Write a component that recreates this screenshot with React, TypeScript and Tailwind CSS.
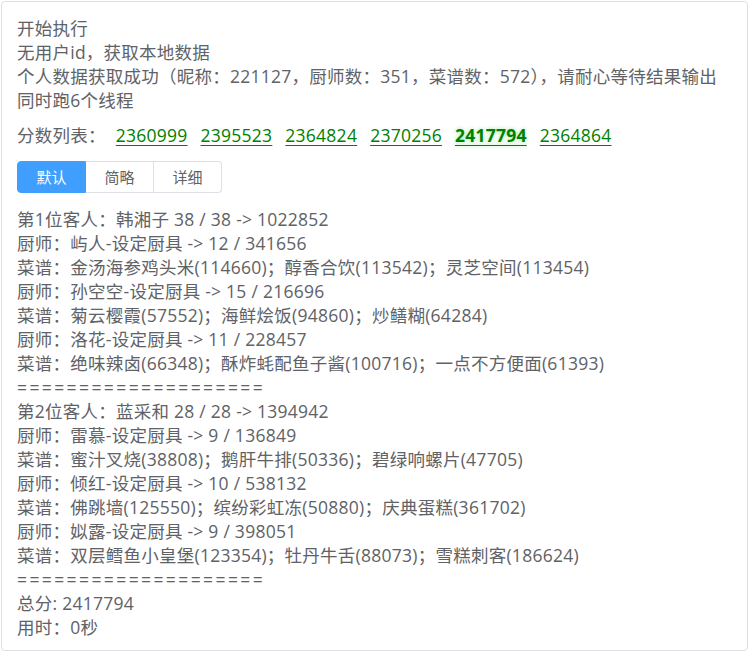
import React from "react";

const scores = ["2360999", "2395523", "2364824", "2370256", "2417794", "2364864"];
const best = "2417794";

const lines1 = [
  "第1位客人：韩湘子 38 / 38 -> 1022852",
  "厨师：屿人-设定厨具 -> 12 / 341656",
  "菜谱：金汤海参鸡头米(114660)；醇香合饮(113542)；灵芝空间(113454)",
  "厨师：孙空空-设定厨具 -> 15 / 216696",
  "菜谱：菊云樱霞(57552)；海鲜烩饭(94860)；炒鳝糊(64284)",
  "厨师：洛花-设定厨具 -> 11 / 228457",
  "菜谱：绝味辣卤(66348)；酥炸蚝配鱼子酱(100716)；一点不方便面(61393)",
];
const lines2 = [
  "第2位客人：蓝采和 28 / 28 -> 1394942",
  "厨师：雷慕-设定厨具 -> 9 / 136849",
  "菜谱：蜜汁叉烧(38808)；鹅肝牛排(50336)；碧绿响螺片(47705)",
  "厨师：倾红-设定厨具 -> 10 / 538132",
  "菜谱：佛跳墙(125550)；缤纷彩虹冻(50880)；庆典蛋糕(361702)",
  "厨师：姒露-设定厨具 -> 9 / 398051",
  "菜谱：双层鳕鱼小皇堡(123354)；牡丹牛舌(88073)；雪糕刺客(186624)",
];

const Sep = () => (
  <div className="tracking-[2.4px]">{"===================="}</div>
);

export default function App() {
  return (
    <div className="bg-white w-[748px] h-[653px] overflow-hidden">
      <div
        className="ml-px mt-px w-[747px] h-[650px] border border-[#dcdfe6] rounded-[4px] px-[15px] pt-[14px] text-[#606266] text-[17.5px] leading-[24px] tracking-[0.25px]"
        style={{ fontFamily: '"Open Sans", "Noto Sans CJK SC", sans-serif' }}
      >
        <div>开始执行</div>
        <div>无用户id，获取本地数据</div>
        <div>个人数据获取成功（昵称：221127，厨师数：351，菜谱数：572），请耐心等待结果输出</div>
        <div>同时跑6个线程</div>
        <div className="mt-[11px] flex items-center whitespace-nowrap">
          <span>分数列表：</span>
          <span className="ml-[10px] flex">
            {scores.map((s) => (
              <a
                key={s}
                href="#"
                className={
                  "mr-[13px] text-[#008000] underline underline-offset-[3px] " +
                  (s === best ? "font-bold [text-shadow:0_0_4px_#9be89b]" : "")
                }
              >
                {s}
              </a>
            ))}
          </span>
        </div>
        <div className="mt-[14px] flex h-[32px] w-[205px] text-[15px] tracking-normal">
          <div className="w-[69px] flex items-center justify-center bg-[#409eff] text-white rounded-l-[4px] border border-[#409eff]">
            默认
          </div>
          <div className="w-[68px] flex items-center justify-center border-y border-r border-[#dcdfe6]">
            简略
          </div>
          <div className="w-[68px] flex items-center justify-center border-y border-r border-[#dcdfe6] rounded-r-[4px]">
            详细
          </div>
        </div>
        <div className="mt-[14px]">
          {lines1.map((l) => (
            <div key={l}>{l}</div>
          ))}
          <Sep />
          {lines2.map((l) => (
            <div key={l}>{l}</div>
          ))}
          <Sep />
          <div>总分: 2417794</div>
          <div>用时：0秒</div>
        </div>
      </div>
    </div>
  );
}
